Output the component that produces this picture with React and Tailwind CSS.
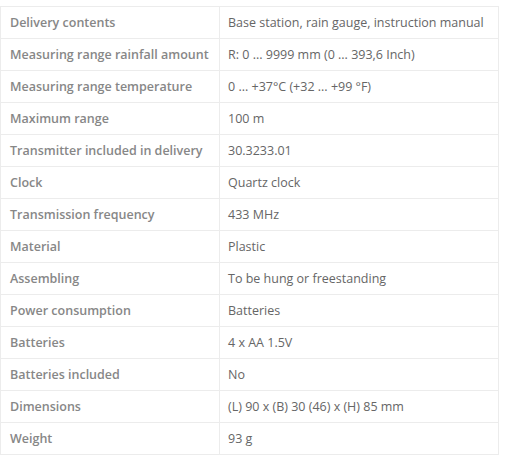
const rows = [
  ["Delivery contents", "Base station, rain gauge, instruction manual"],
  ["Measuring range rainfall amount", "R: 0 ... 9999 mm (0 ... 393,6 Inch)"],
  ["Measuring range temperature", "0 ... +37°C (+32 ... +99 °F)"],
  ["Maximum range", "100 m"],
  ["Transmitter included in delivery", "30.3233.01"],
  ["Clock", "Quartz clock"],
  ["Transmission frequency", "433 MHz"],
  ["Material", "Plastic"],
  ["Assembling", "To be hung or freestanding"],
  ["Power consumption", "Batteries"],
  ["Batteries", "4 x AA 1.5V"],
  ["Batteries included", "No"],
  ["Dimensions", "(L) 90 x (B) 30 (46) x (H) 85 mm"],
  ["Weight", "93 g"],
];

export default function App() {
  return (
    <div className="min-h-[469px] bg-white pt-[6px] font-['Open_Sans',sans-serif] text-[12.5px]">
      <table className="w-[499px] border-collapse border border-[#ececec]">
        <tbody>
          {rows.map(([label, value]) => (
            <tr key={label} className="h-[32px] border-b border-[#ececec]">
              <td className="w-[219px] border-r border-[#ececec] pl-[9px] pt-[2px] font-semibold text-[#878787] leading-none whitespace-nowrap">
                {label}
              </td>
              <td className="pl-[8px] pt-[2px] text-[#666] leading-none whitespace-nowrap">
                {value}
              </td>
            </tr>
          ))}
        </tbody>
      </table>
    </div>
  );
}
